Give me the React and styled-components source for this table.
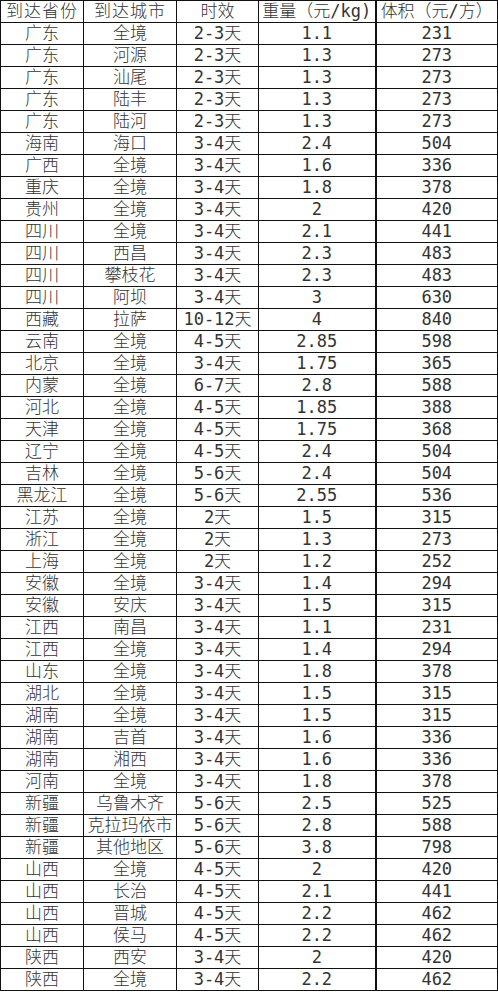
import React from 'react';
import styled, { createGlobalStyle } from 'styled-components';

const GlobalStyle = createGlobalStyle`
  html, body {
    margin: 0;
    padding: 0;
    background: #fff;
  }
`;

const rows = [
  ['广东', '全境', '2-3天', '1.1', '231'],
  ['广东', '河源', '2-3天', '1.3', '273'],
  ['广东', '汕尾', '2-3天', '1.3', '273'],
  ['广东', '陆丰', '2-3天', '1.3', '273'],
  ['广东', '陆河', '2-3天', '1.3', '273'],
  ['海南', '海口', '3-4天', '2.4', '504'],
  ['广西', '全境', '3-4天', '1.6', '336'],
  ['重庆', '全境', '3-4天', '1.8', '378'],
  ['贵州', '全境', '3-4天', '2', '420'],
  ['四川', '全境', '3-4天', '2.1', '441'],
  ['四川', '西昌', '3-4天', '2.3', '483'],
  ['四川', '攀枝花', '3-4天', '2.3', '483'],
  ['四川', '阿坝', '3-4天', '3', '630'],
  ['西藏', '拉萨', '10-12天', '4', '840'],
  ['云南', '全境', '4-5天', '2.85', '598'],
  ['北京', '全境', '3-4天', '1.75', '365'],
  ['内蒙', '全境', '6-7天', '2.8', '588'],
  ['河北', '全境', '4-5天', '1.85', '388'],
  ['天津', '全境', '4-5天', '1.75', '368'],
  ['辽宁', '全境', '4-5天', '2.4', '504'],
  ['吉林', '全境', '5-6天', '2.4', '504'],
  ['黑龙江', '全境', '5-6天', '2.55', '536'],
  ['江苏', '全境', '2天', '1.5', '315'],
  ['浙江', '全境', '2天', '1.3', '273'],
  ['上海', '全境', '2天', '1.2', '252'],
  ['安徽', '全境', '3-4天', '1.4', '294'],
  ['安徽', '安庆', '3-4天', '1.5', '315'],
  ['江西', '南昌', '3-4天', '1.1', '231'],
  ['江西', '全境', '3-4天', '1.4', '294'],
  ['山东', '全境', '3-4天', '1.8', '378'],
  ['湖北', '全境', '3-4天', '1.5', '315'],
  ['湖南', '全境', '3-4天', '1.5', '315'],
  ['湖南', '吉首', '3-4天', '1.6', '336'],
  ['湖南', '湘西', '3-4天', '1.6', '336'],
  ['河南', '全境', '3-4天', '1.8', '378'],
  ['新疆', '乌鲁木齐', '5-6天', '2.5', '525'],
  ['新疆', '克拉玛依市', '5-6天', '2.8', '588'],
  ['新疆', '其他地区', '5-6天', '3.8', '798'],
  ['山西', '全境', '4-5天', '2', '420'],
  ['山西', '长治', '4-5天', '2.1', '441'],
  ['山西', '晋城', '4-5天', '2.2', '462'],
  ['山西', '侯马', '4-5天', '2.2', '462'],
  ['陕西', '西安', '3-4天', '2', '420'],
  ['陕西', '全境', '3-4天', '2.2', '462'],
];

const headers = ['到达省份', '到达城市', '时效', '重量（元/kg)', '体积（元/方）'];
const widths = [83, 93, 82, 117, 122];

const Sheet = styled.table`
  border-collapse: collapse;
  table-layout: fixed;
  width: 497px;
  font-family: "DejaVu Sans Mono", "Noto Sans CJK SC", monospace;
  font-size: 17px;
  font-weight: 300;
  color: #333;
`;

const Row = styled.tr`
  height: 21px;
`;

const Cell = styled.td`
  border: 1px solid #111;
  border-left-width: ${(p) => (p.$thick ? '2px' : '1px')};
  padding: 0;
  height: 21px;
  line-height: 21px;
  text-align: center;
  white-space: nowrap;
  overflow: hidden;
`;

const HeadCell = styled(Cell).attrs({ as: 'th' })`
  font-weight: 300;
  letter-spacing: ${(p) => (p.$wide ? '1px' : '0')};
`;

export default function App() {
  return (
    <>
      <GlobalStyle />
      <Sheet>
        <colgroup>
          {widths.map((w, i) => (
            <col key={i} style={{ width: w }} />
          ))}
        </colgroup>
        <thead>
          <Row>
            {headers.map((h, i) => (
              <HeadCell key={h} $thick={i === 4} $wide={i < 2}>
                {h}
              </HeadCell>
            ))}
          </Row>
        </thead>
        <tbody>
          {rows.map((r, ri) => (
            <Row key={ri}>
              {r.map((c, ci) => (
                <Cell key={ci} $thick={ci === 4}>
                  {c}
                </Cell>
              ))}
            </Row>
          ))}
        </tbody>
      </Sheet>
    </>
  );
}
